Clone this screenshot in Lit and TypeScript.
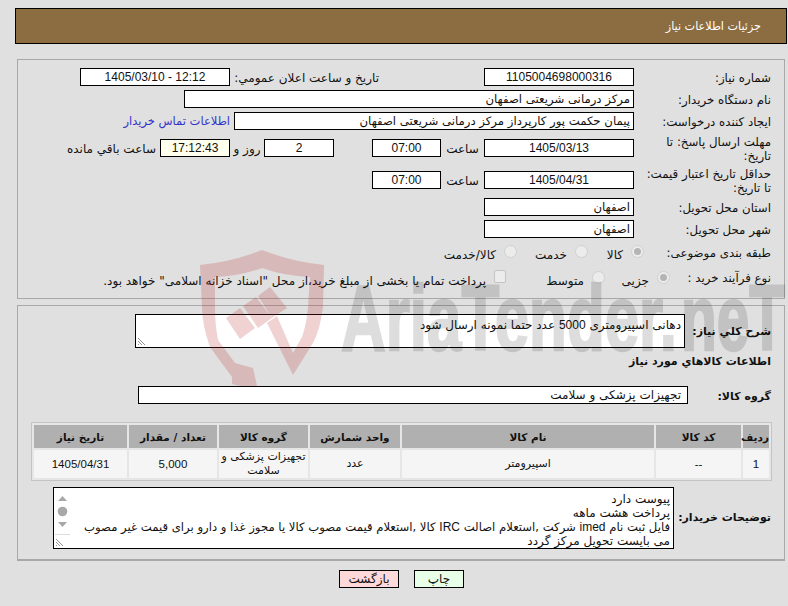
import { LitElement, html, css } from "lit";
import { customElement } from "lit/decorators.js";

const HEADERS = ["ردیف", "کد کالا", "نام کالا", "واحد شمارش", "گروه کالا", "تعداد / مقدار", "تاریخ نیاز"];

@customElement("app-root")
export class AppRoot extends LitElement {
  static styles = css`
    :host { display: block; width: 788px; height: 606px; background: #e0e0e0; position: relative; overflow: hidden;
      font-family: "DejaVu Sans", sans-serif; font-size: 12px; color: #111; direction: rtl; }
    * { box-sizing: border-box; }
    .page { padding: 8px 1px 0 15px; display: flex; flex-direction: column; }
    .title { height: 36px; background: #8c6d41; border: 1px solid #000; color: #fff; display: flex; align-items: center; padding-right: 25px; margin-bottom: 15px; font-size: 11.2px; }
    .panel { border: 1px solid #a8a8a8; margin: 0 2px 0 2px; }
    .top { height: 240px; padding-top: 8px; display: flex; flex-direction: column; gap: 4px; }
    .bottom { height: 256px; margin-top: 6px; padding-top: 8px; border-bottom-width: 2px; display: flex; flex-direction: column; }
    .row { display: flex; align-items: center; height: 18px; flex: none; }
    .row.two { height: 28px; }
    .row.opt { height: 22px; }
    .lbl { width: 150px; padding: 2px 13px 0 0; flex: none; line-height: 14px; white-space: nowrap; font-size: 11.8px; }
    .box { background: #fff; border: 1px solid #000; height: 18px; line-height: 16px; padding: 0 3px; flex: none; white-space: nowrap; overflow: hidden; font-size: 11.7px; }
    .c { text-align: center; direction: ltr; }
    .n { font-family: "Liberation Sans", sans-serif; font-size: 12px; }
    .w150 { width: 150px; } .w450 { width: 450px; } .w400 { width: 400px; } .w69 { width: 69px; } .w70 { width: 70px; }
    .pub { margin-right: 105px; width: 149px; flex: none; white-space: nowrap; padding-top: 2px; }
    .link { margin-right: 4px; color: #3333cc; white-space: nowrap; font-size: 11.5px; }
    .hour { width: 43px; flex: none; text-align: center; padding-top: 1px; }
    .gap38 { margin-right: 38px; }
    .day { width: 34px; flex: none; text-align: center; padding-top: 2px; }
    .rest { margin-right: 4px; white-space: nowrap; padding-top: 1px; }
    .t { background: #ffffee; }
    .opt .lbl { width: 140px; padding-top: 0; }
    .opt.proc .lbl { width: 114px; padding-bottom: 2px; }
    .item { display: flex; align-items: center; flex: none; gap: 8px; white-space: nowrap; }
    .i56 { width: 56px; } .i71 { width: 71px; } .i65 { width: 65px; } .i99 { width: 99px; }
    .item span.tx { padding-top: 3px; }
    .radio { width: 13px; height: 13px; border-radius: 50%; background: #ececec; border: 1px solid #d0d0d0; flex: none; display: flex; align-items: center; justify-content: center; margin-top: -3px; }
    .radio.on::after { content: ""; width: 7px; height: 7px; border-radius: 50%; background: #b4b4b4; }
    .check { width: 12px; height: 13px; background: #ececec; border: 1px solid #c4c4c4; border-radius: 2px; flex: none; margin-top: -5px; }
    .need { display: flex; flex: none; }
    .bold, .need .lab, .group .lab { font-weight: bold; font-size: 11px; }
    .need .lab { width: 99px; padding: 11px 13px 0 0; white-space: nowrap; }
    .ta { position: relative; background: #fff; border: 1px solid #000; width: 550px; height: 34px; padding: 2px 3px; line-height: 16px; white-space: nowrap; }
    .grip { position: absolute; left: 1px; bottom: 1px; width: 9px; height: 9px; }
    .info { height: 14px; line-height: 14px; margin-top: 7px; padding-right: 13px; flex: none; }
    .group { margin-top: 17px; }
    .group .lab { width: 96px; padding: 2px 13px 0 0; white-space: nowrap; flex: none; }
    .group .box { width: 550px; padding-right: 6px; font-size: 12px; }
    table { margin: 18px 12px 0 13px; width: 741px; flex: none; table-layout: fixed; border: 1px solid #c4c4c4; border-spacing: 2px; background: #e6e6e6; }
    th, td { padding: 0; text-align: center; font-size: 11px; }
    th { background: #b0b0b0; height: 23px; font-weight: bold; font-size: 10.5px; }
    td { background: #f5f5f5; height: 28px; line-height: 14px; }
    td.n { font-size: 11.5px; }
    .notes { margin-top: 6px; }
    .notes .lab { width: 110px; padding: 24px 13px 0 0; }
    .ta.big { width: 621px; height: 62px; padding: 4px 3px 0 0; line-height: 14px; }
    .ta.big .tight { font-size: 11.65px; }
    .ta.big .tight .n { font-size: 12px; }
    .bar { position: absolute; left: 1px; top: 1px; bottom: 1px; width: 15px; display: flex; flex-direction: column; align-items: center; background: #fff; }
    .bar svg { display: block; }
    .buttons { display: flex; justify-content: flex-start; margin: 9px 323px 0 0; gap: 15px; flex: none; }
    .btn { height: 18px; line-height: 16px; border: 1px solid #000; text-align: center; font-family: inherit; font-size: 12px; padding: 0; color: #111; }
    .print { width: 50px; background: #e8ffe8; }
    .back { width: 60px; background: #ffd9d9; }
    .wm { position: absolute; left: 0; top: 0; width: 788px; height: 606px; pointer-events: none; direction: ltr; }
    .wm .word { opacity: .13; }
    .wm text { font-family: "Liberation Sans", sans-serif; font-weight: bold; font-size: 92px; fill: #000; stroke: #000; stroke-width: 2.500px; direction: ltr; }
    .wm .shield { fill: #b41e1e; fill-opacity: .2; }
  `;

  private grip() {
    return html`<svg class="grip" viewBox="0 0 9 9"><path d="M1 1l7 7M1 4l4 4M1 7l1 1" stroke="#777" stroke-width=".8" fill="none"/></svg>`;
  }

  render() {
    return html`
      <div class="page">
        <div class="title">جزئیات اطلاعات نیاز</div>
        <div class="panel top">
          <div class="row">
            <div class="lbl">شماره نیاز:</div>
            <div class="box c n w150">1105004698000316</div>
            <div class="pub">تاریخ و ساعت اعلان عمومي:</div>
            <div class="box c n w150">1405/03/10 - 12:12</div>
          </div>
          <div class="row">
            <div class="lbl">نام دستگاه خریدار:</div>
            <div class="box w450">مرکز درمانی شریعتی اصفهان</div>
          </div>
          <div class="row">
            <div class="lbl">ایجاد کننده درخواست:</div>
            <div class="box w400">پیمان حکمت پور کارپرداز مرکز درمانی شریعتی اصفهان</div>
            <div class="link">اطلاعات تماس خریدار</div>
          </div>
          <div class="row two">
            <div class="lbl">مهلت ارسال پاسخ: تا<br />تاریخ:</div>
            <div class="box c n w150">1405/03/13</div>
            <div class="hour">ساعت</div>
            <div class="box c n w69">07:00</div>
            <div class="box c n w70 gap38">2</div>
            <div class="day">روز و</div>
            <div class="box c n w70 t">17:12:43</div>
            <div class="rest">ساعت باقي مانده</div>
          </div>
          <div class="row two">
            <div class="lbl">حداقل تاریخ اعتبار قیمت:<br />تا تاریخ:</div>
            <div class="box c n w150">1405/04/31</div>
            <div class="hour">ساعت</div>
            <div class="box c n w69">07:00</div>
          </div>
          <div class="row">
            <div class="lbl">استان محل تحویل:</div>
            <div class="box w150">اصفهان</div>
          </div>
          <div class="row">
            <div class="lbl">شهر محل تحویل:</div>
            <div class="box w150">اصفهان</div>
          </div>
          <div class="row opt">
            <div class="lbl">طبقه بندی موضوعی:</div>
            <div class="item i56"><span class="radio on"></span><span class="tx">کالا</span></div>
            <div class="item i71"><span class="radio"></span><span class="tx">خدمت</span></div>
            <div class="item"><span class="radio"></span><span class="tx">کالا/خدمت</span></div>
          </div>
          <div class="row opt proc">
            <div class="lbl">نوع فرآیند خرید :</div>
            <div class="item i65"><span class="radio on"></span><span class="tx">جزیی</span></div>
            <div class="item i99"><span class="radio"></span><span class="tx">متوسط</span></div>
            <div class="item"><span class="check"></span><span class="tx">پرداخت تمام یا بخشی از مبلغ خرید،از محل "اسناد خزانه اسلامی" خواهد بود.</span></div>
          </div>
        </div>
        <div class="panel bottom">
          <div class="need">
            <div class="lab">شرح کلي نیاز:</div>
            <div class="ta">دهانی اسپیرومتری <span class="n">5000</span> عدد حتما نمونه ارسال شود${this.grip()}</div>
          </div>
          <div class="info bold">اطلاعات کالاهاي مورد نیاز</div>
          <div class="row group">
            <div class="lab">گروه کالا:</div>
            <div class="box">تجهیزات پزشکی و سلامت</div>
          </div>
          <table>
            <colgroup>
              <col style="width:26px" /><col style="width:85px" /><col style="width:252px" /><col style="width:90px" /><col style="width:89px" /><col style="width:88px" /><col style="width:93px" />
            </colgroup>
            <thead><tr>${HEADERS.map((h) => html`<th>${h}</th>`)}</tr></thead>
            <tbody>
              <tr>
                <td class="n">1</td><td class="n">--</td><td>اسپیرومتر</td><td>عدد</td>
                <td>تجهیزات پزشکی و سلامت</td><td class="n">5,000</td><td class="n">1405/04/31</td>
              </tr>
            </tbody>
          </table>
          <div class="need notes">
            <div class="lab">توضیحات خریدار:</div>
            <div class="ta big">
              پیوست دارد<br />پرداخت هشت ماهه<br /><span class="tight">فایل ثبت نام <span class="n">imed</span> شرکت ,استعلام اصالت <span class="n">IRC</span> کالا ,استعلام قیمت مصوب کالا یا مجوز غذا و دارو برای قیمت غیر مصوب</span><br />می بایست تحویل مرکز گردد
              <div class="bar">
                <svg width="15" height="46" viewBox="0 0 15 46">
                  <path d="M3 12l4.500-5 4.500 5z" fill="#a8a8a8" />
                  <circle cx="7.500" cy="22.500" r="4.800" fill="#a8a8a8" />
                  <path d="M3 33l4.500 5 4.500-5z" fill="#a8a8a8" />
                  <path d="M0 45.500h15" stroke="#ddd" />
                </svg>
              </div>
              ${this.grip()}
            </div>
          </div>
        </div>
        <div class="buttons">
          <button class="btn print">چاپ</button>
          <button class="btn back">بازگشت</button>
        </div>
      </div>
      <svg class="wm" viewBox="0 0 788 606">
        <g class="word">
          <text x="341" y="350" textLength="336" lengthAdjust="spacingAndGlyphs">AriaTender.</text>
          <text x="681" y="350" textLength="104" lengthAdjust="spacingAndGlyphs">neT</text>
        </g>
        <path class="shield" d="M200 265Q232 262 262 250Q293 262 324 265L323 307Q320 330 313 343L293 375L267 323L277 316L293 353L302 337Q307 322 308 307L310 277Q285 276 262 268Q240 276 215 277L215 307Q215 325 218 340L235 363L253 368L257 386H240L232 384L232 377L210 347Q202 325 202 307Z" />
        <path class="shield" d="M226 318L240 308L255 328L240 339Z M243 306L256 297L272 318L258 328Z M258 296L270 287L287 308L272 318Z" />
      </svg>
    `;
  }
}
